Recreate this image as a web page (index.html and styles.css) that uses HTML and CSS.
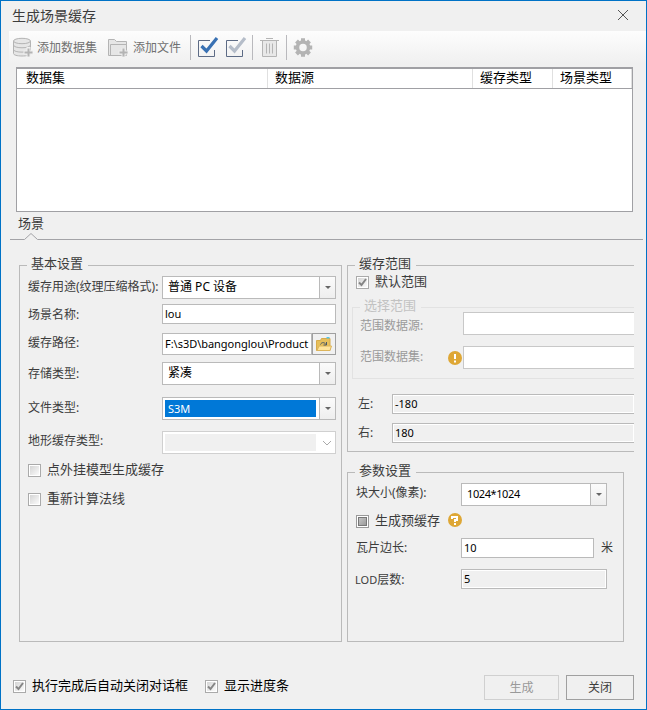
FILE: index.html
```html
<!DOCTYPE html>
<html lang="zh-CN">
<head>
<meta charset="utf-8">
<title>生成场景缓存</title>
<link rel="stylesheet" href="styles.css">
</head>
<body>
<main class="window">
  <header class="titlebar">
    <h1>生成场景缓存</h1>
    <svg class="close" width="12" height="12" viewBox="0 0 12 12"><path d="M1 1l10 10M11 1L1 11"/></svg>
  </header>

  <nav class="toolbar">
    <svg class="tool-icon" width="20" height="21" viewBox="0 0 20 21" fill="#e6e6e6" stroke="#b4b4b4">
      <path d="M.5 4v12.500c0 1.500 3.500 2.500 8.500 2.500s8.500-1 8.500-2.500V4"/>
      <ellipse cx="9" cy="4" rx="8.500" ry="2.700"/>
      <path d="M.5 8c0 3.700 17 3.700 17 0M.5 12.500c0 3.500 17 3.500 17 0" fill="none"/>
      <path d="M15.500 10v10M10.500 15.500H20" stroke="#f0f0f0" stroke-width="4"/><path d="M15.500 11.500v8M11.500 15.500h8" stroke="#b4b4b4" stroke-width="2"/>
    </svg>
    <span class="add-data">添加数据集</span>
    <svg class="tool-icon" width="20" height="21" viewBox="0 0 20 21" fill="#e6e6e6" stroke="#b4b4b4">
      <path d="M.5 18.500v-16h6l2 2h10v14z"/><path d="M2.500 18V7.500h16V18" />
      <path d="M15.500 11v9M10.500 15.500H20" stroke="#ededed" stroke-width="4"/><path d="M15.500 11.500v8M11.500 15.500h8" stroke="#b4b4b4" stroke-width="2"/>
    </svg>
    <span class="add-file">添加文件</span>
    <i class="sep"></i>
    <svg class="check-all" width="22" height="21" viewBox="0 0 22 21" fill="none"><path d="M13 3.500H1.500v16h16V13" stroke="#5d6b85"/><path d="M4.500 9l5 5L20 1" stroke="#3971b3" stroke-width="3.200"/></svg>
    <svg class="check-invert" width="22" height="21" viewBox="0 0 22 21" fill="none"><path d="M13 3.500H1.500v16h16V13" stroke="#5d6b85"/><path d="M4.500 9l5 5L20 1" stroke="#b5bdc9" stroke-width="3.200"/></svg>
    <i class="sep sep-trash"></i>
    <svg class="trash" width="19" height="21" viewBox="0 0 19 21" fill="none" stroke="#b4b4b4"><path d="M2.500 3.500h14v16h-14z" fill="#e8e8e8"/><path d="M0 3.500h19M6 1.500h7M6.500 6.500v10M9.500 6.500v10M12.500 6.500v10"/></svg>
    <i class="sep sep-gear"></i>
    <svg class="gear" width="20" height="21" viewBox="-10 -10.500 20 21" fill="none" stroke="#b4b4b4"><circle r="5.500" stroke-width="3.500"/><path stroke-width="4" d="M0-9.200V-6M0 6v3.200M-9.200 0H-6M6 0h3.200M-6.500-6.500l2 2M4.500 4.500l2 2M6.500-6.500l-2 2M-4.500 4.500l-2 2"/></svg>
  </nav>

  <section class="list">
    <div class="list-head"><span>数据集</span><span>数据源</span><span>缓存类型</span><span>场景类型</span></div>
  </section>

  <div class="tabs">
    <span>场景</span>
    <svg width="633" height="8" viewBox="0 0 633 8" fill="#f0f0f0" stroke="#a3a3a7"><path d="M0 6.500h14.500l6.500-6 6.500 6H633"/></svg>
  </div>

  <div class="panels">
    <section class="group basic">
      <h2>基本设置</h2>
      <div class="row r1"><label>缓存用途(纹理压缩格式):</label><div class="select"><span>普通 PC 设备</span><b></b></div></div>
      <div class="row r2"><label>场景名称:</label><div class="input">lou</div></div>
      <div class="row r3"><label>缓存路径:</label><div class="input path">F:\s3D\bangonglou\Product</div>
        <div class="browse"><svg width="16" height="15" viewBox="0 0 16 15"><path d="M.5 13.500v-10h4l1-2h8.500v12z" fill="#e6bf5b" stroke="#d8ab4a"/><path d="M10.500 0h3v1.500h-3z" fill="#54c5e8"/><path d="M1 13.500l2-4.500h12.500l-1.500 4.500z" fill="#ffe49b" stroke="#dcb45a"/><path d="M4.500 7.500c1-2.500 4-2.500 5.500 0M10.500 5v3H7.500" fill="none" stroke="#4c5967"/></svg></div></div>
      <div class="row r4"><label>存储类型:</label><div class="select"><span>紧凑</span><b></b></div></div>
      <div class="row r5"><label>文件类型:</label><div class="select selected"><span>S3M</span><b></b></div></div>
      <div class="row r6"><label>地形缓存类型:</label><div class="select disabled"><span></span><svg width="10" height="7" viewBox="0 0 10 7"><path d="M1 1l4 4 4-4"/></svg></div></div>
      <div class="check c1"><i class="box"></i>点外挂模型生成缓存</div>
      <div class="check c2"><i class="box"></i>重新计算法线</div>
    </section>

    <div class="right">
      <section class="group range">
        <h2>缓存范围</h2>
        <div class="check c3"><i class="box on"><svg width="9" height="9" viewBox="0 0 9 9"><path d="M1 4.500L3.500 7 8 1"/></svg></i>默认范围</div>
        <section class="group choose">
          <h2>选择范围</h2>
          <div class="row q1"><label>范围数据源:</label><div class="input open"></div></div>
          <div class="row q2"><label>范围数据集:</label><svg class="badge" width="14" height="14" viewBox="0 0 14 14"><circle cx="7" cy="7" r="7"/><path d="M7 3v5M7 9.500v2"/></svg><div class="input open"></div></div>
        </section>
        <div class="row e1"><label>左:</label><div class="input readonly cut">-180</div></div>
        <div class="row e2"><label>右:</label><div class="input readonly cut">180</div></div>
      </section>

      <section class="group params">
        <h2>参数设置</h2>
        <div class="row p1"><label>块大小(像素):</label><div class="select block"><span>1024*1024</span><b></b></div></div>
        <div class="check c4"><i class="box mixed"></i>生成预缓存<svg class="badge" width="14" height="14" viewBox="0 0 14 14"><circle cx="7" cy="7" r="7"/><path d="M4 6V4h5v3H7v2M7 10v2"/></svg></div>
        <div class="row p2"><label>瓦片边长:</label><div class="input">10</div><em>米</em></div>
        <div class="row p3"><label><small>LOD</small>层数:</label><div class="input readonly">5</div></div>
      </section>
    </div>
  </div>

  <footer>
    <div class="check"><i class="box on"><svg width="9" height="9" viewBox="0 0 9 9"><path d="M1 4.500L3.500 7 8 1"/></svg></i>执行完成后自动关闭对话框</div>
    <div class="check progress"><i class="box on"><svg width="9" height="9" viewBox="0 0 9 9"><path d="M1 4.500L3.500 7 8 1"/></svg></i>显示进度条</div>
    <button class="generate" disabled>生成</button>
    <button>关闭</button>
  </footer>
</main>
</body>
</html>
```
FILE: styles.css
```css
* { box-sizing: border-box; margin: 0; padding: 0; }
body { width: 647px; height: 710px; overflow: hidden; font: 12px/16px "Noto Sans", "Noto Sans CJK SC", sans-serif; color: #3c3c3c; }
svg { display: block; flex: none; }
i, em { font-style: normal; }
label, span, h1, h2, .check, button { white-space: nowrap; }
.window { width: 647px; height: 710px; border: 1px solid #0072c6; background: #f0f0f0; display: flex; flex-direction: column; }
.titlebar { height: 30px; flex: none; padding: 0 17px 0 11px; display: flex; align-items: center; justify-content: space-between; }
h1 { font-size: 14px; font-weight: 400; line-height: 20px; }
.close { stroke: #555; fill: none; margin-bottom: 2px; }
.toolbar { height: 33px; flex: none; margin-left: 8px; padding-left: 4px; display: flex; align-items: center; color: #707070; background: linear-gradient(#fdfdfd, #f0f0f0); }
.toolbar span { padding-top: 1px; }
.add-data { margin-left: 4px; width: 71px; }
.add-file { margin-left: 5px; width: 57px; }
.sep { width: 1px; height: 25px; flex: none; background: #b9b9bd; }
.check-all { margin-left: 6px; }
.check-invert { margin-left: 6px; }
.sep-trash { margin-left: 5px; }
.trash { margin-left: 7px; }
.sep-gear { margin-left: 7px; }
.gear { margin-left: 6px; }
.list { width: 617px; height: 145px; flex: none; margin: 3px 0 0 15px; background: #fff; border: 1px solid #a0a0a4; border-top-width: 2px; }
.list-head { height: 20px; display: grid; grid-template-columns: 251px 205px 80px 79px; border-bottom: 1px solid #a0a0a4; color: #000; font-size: 13px; line-height: 17px; }
.list-head span { padding-left: 7px; border-right: 1px solid #e0e0e0; }
.list-head span:first-child { padding-left: 9px; }
.tabs { height: 29px; flex: none; padding: 3px 0 0 9px; font-size: 13px; line-height: 16px; }
.tabs span { display: block; margin: 0 0 0 8px; height: 18px; }
.panels { height: 378px; flex: none; margin: 24px 0 0 18px; display: flex; gap: 5px; }
.group { border: 1px solid #bababa; display: flex; flex-direction: column; }
h2 { align-self: flex-start; flex: none; height: 20px; margin: -12px 0 0 7px; padding: 0 5px 0 4px; background: #f0f0f0; font-size: 13px; line-height: 18px; font-weight: 400; }
.basic { width: 323px; height: 377px; padding-left: 7px; }
.basic h2 { margin-left: 0; }
.right { width: 288px; }
.row { display: flex; align-items: center; flex: none; }
.basic label { width: 135px; padding-left: 1px; flex: none; }
.input, .select { height: 20px; border: 1px solid #bababa; background: #fff; color: #000; line-height: 18px; font-size: 12px; }
.input { padding-left: 2px; font-size: 11px; overflow: hidden; white-space: nowrap; }
.basic .input { width: 174px; }
.select { display: flex; height: 23px; width: 174px; line-height: 20px; }
.select span { flex: 1; padding-left: 5px; }
.select b { width: 16px; border-left: 1px solid #bababa; background: linear-gradient(#fbfbfb, #eee); display: flex; align-items: center; justify-content: center; }
.select b::after { content: ""; border: 3px solid transparent; border-top-color: #666; border-bottom: 0; }
.r1 { height: 23px; margin-top: 2px; }
.r2 { height: 20px; margin-top: 5px; }
.r3 { height: 22px; margin-top: 9px; }
.r1 label, .r5 label { padding-bottom: 1px; }
.r2 label { padding-top: 1px; }
.r3 label, .r6 label, .p1 label { padding-bottom: 3px; }
.basic .path { width: 150px; height: 22px; line-height: 20px; letter-spacing: -.03px; }
.browse { width: 24px; height: 22px; border: 1px solid #a0a0a0; background: #f1f1f1; padding: 3px 0 0 3px; }
.r4 { height: 23px; margin-top: 7px; }
.r5 { height: 23px; margin-top: 12px; }
.r6 { height: 23px; margin-top: 11px; }
.selected span { margin: 2px 3px 2px 2px; padding-left: 3px; background: #0078d7; color: #fff; font-size: 11px; line-height: 17px; }
.disabled { border-color: #d0d0d0; }
.disabled span { flex: none; width: 151px; margin: 2px; background: #f0f0f0; }
.disabled svg { margin: 8px 0 0 4px; stroke: #aaa; fill: none; }
.check { display: flex; align-items: center; font-size: 13px; line-height: 18px; flex: none; }
.box { width: 13px; height: 13px; flex: none; border: 1px solid #aaa; margin-right: 6px; background: linear-gradient(135deg, #d0d0d0, #fff); box-shadow: inset 0 0 0 1px #fff; position: relative; top: 1.5px; }
.box svg { margin: 1px; fill: none; stroke: #858585; stroke-width: 2; }
.mixed { background: linear-gradient(135deg, #d0d0d0, #8f8f8f); border-color: #999; box-shadow: inset 0 0 0 1px #fff, inset 0 0 0 2px #777; }
.c1 { margin: 6px 0 0 1px; }
.c2 { margin: 11px 0 0 1px; }
.range { width: 287px; height: 187px; border-right: 0; padding-left: 4px; }
.range > h2, .params > h2 { margin-left: 3px; }
.c3 { margin: -2px 0 0 4px; }
.choose { height: 72px; flex: none; margin-top: 17px; border-color: #e2e2e2; border-right: 0; color: #9a9a9a; }
.choose h2 { color: #c2c2c2; }
.choose label { margin-left: 7px; width: 104px; flex: none; }
.q1 { height: 23px; margin-top: -4px; }
.q2 { height: 23px; margin-top: 11px; }
.choose .q2 label { width: 88px; padding-bottom: 2px; }
.q1 label { padding-top: 4px; }
.badge { fill: #dea735; }
.badge path { fill: none; stroke: #fff; stroke-width: 2; }
.open { width: 171px; height: 23px; flex: none; border-color: #c8c8c8; border-right: 0; }
.choose .q1 label { width: 103px; }
.q2 .open { margin-left: 1px; }
.e1 { margin-top: 15px; }
.e2 { margin-top: 9px; }
.range > .row label { margin-left: 6px; width: 34px; }
.readonly { background: #f0f0f0; box-shadow: inset 0 0 0 1px #fff; }
.cut { width: 242px; border-right: 0; }
.params { width: 277px; height: 170px; margin-top: 20px; padding-left: 4px; }
.params label { margin-left: 4px; width: 105px; flex: none; }
.p1 { height: 23px; margin-top: 2px; }
.p1 .select { width: 146px; }
.block { font-size: 11px; letter-spacing: -.4px; }
.c4 { margin: 5px 0 0 4px; }
.c4 .badge { margin-left: 8px; }
.p2 { margin-top: 9px; }
.p2 .input { width: 133px; }
.p2 em { margin-left: 7px; }
.p3 { margin-top: 11px; }
.p3 .input { width: 146px; }
.params .p3 label { margin-left: 3px; width: 106px; padding-top: 1px; }
small { font-size: 11px; }
footer { display: flex; align-items: center; margin: 32px 0 0 12px; height: 25px; color: #000; }
footer .check { margin-bottom: 5px; }
.progress { margin-left: 17px; }
button { width: 68px; height: 25px; margin-left: 7px; border: 1px solid #a0a0a0; background: #f0f0f0; color: #3c3c3c; font: inherit; }
.generate { width: 75px; margin-left: auto; border-color: #d0d0d0; color: #999; }
footer button:last-child { margin-right: 12px; }
```
